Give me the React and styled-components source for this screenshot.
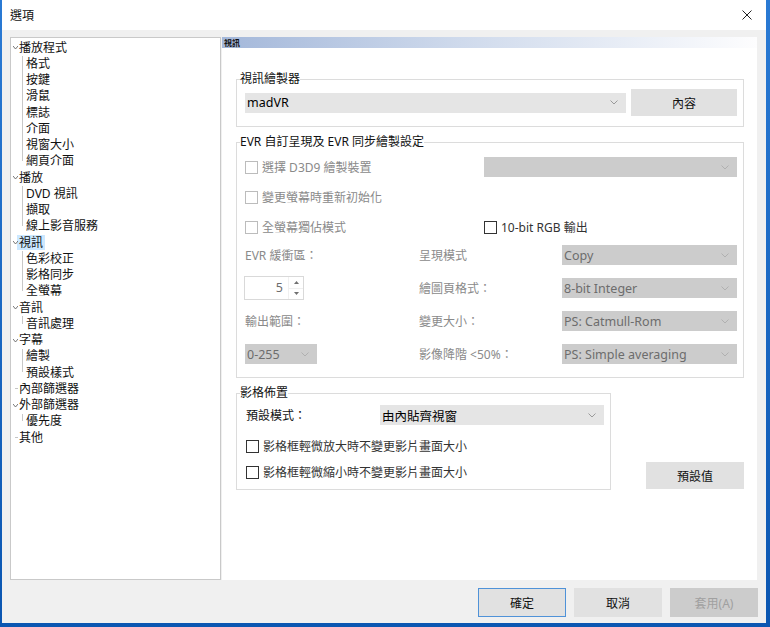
import React from 'react'
import styled, { createGlobalStyle } from 'styled-components'

const GlobalStyle = createGlobalStyle`
  html, body {
    margin: 0;
    padding: 0;
  }
  body {
    background: #0f5bb5;
    font-family: "Noto Sans", "Noto Sans CJK TC", sans-serif;
    font-size: 12px;
    color: #111;
  }
  * {
    box-sizing: border-box;
  }
`

const Desktop = styled.div`
  width: 770px;
  height: 627px;
  padding: 0 4px 4px 2px;
  background: linear-gradient(#2a7ad4, #0b56b1);
`
const Window = styled.div`
  height: 100%;
  display: flex;
  flex-direction: column;
  background: #f0f0f0;
`
const TitleBar = styled.div`
  height: 30px;
  flex: none;
  display: flex;
  align-items: center;
  justify-content: space-between;
  padding: 0 14px 0 8px;
  background: #fff;
  font-size: 12px;
`
const Body = styled.div`
  flex: 1;
  display: flex;
  flex-direction: column;
  padding: 7px 10px 0 8px;
`
const Main = styled.div`
  height: 543px;
  display: flex;
  gap: 1px;
`

/* tree */
const TreeBox = styled.div`
  width: 211px;
  flex: none;
  background: #fff;
  border: 1px solid #c9c9c9;
  padding-top: 1px;
`
const Row = styled.div`
  height: 16.25px;
  display: flex;
  align-items: center;
  padding-left: ${p => (p.$child ? 13 : 6)}px;
  position: relative;
  white-space: nowrap;
`
const Caret = styled.span`
  position: absolute;
  left: 2px;
  top: 7px;
  width: 5px;
  height: 3px;
  display: flex;
`
const Tick = styled.span`
  position: absolute;
  left: 4px;
  top: 8px;
  width: 3px;
  border-top: 1px solid #c4c4c4;
`
const Label = styled.span`
  padding: 0 2px;
  line-height: 15px;
  background: ${p => (p.$selected ? '#cce8ff' : 'transparent')};
`
const Children = styled.div`
  position: relative;
  &::before {
    content: '';
    position: absolute;
    left: 11px;
    top: 1px;
    bottom: 8px;
    border-left: 1px solid #c8c8c8;
  }
`

/* page */
const Page = styled.div`
  flex: 1;
  background: #fff;
  display: flex;
  flex-direction: column;
`
const PageHeader = styled.div`
  height: 11px;
  background: linear-gradient(to right, #a4b8da, #cfdaec 45%, #fdfdfe);
  font-size: 8px;
  font-weight: bold;
  line-height: 11px;
  padding-left: 2px;
`
const PageContent = styled.div`
  padding: 0 13px 0 14px;
  display: flex;
  flex-direction: column;
`
const Group = styled.fieldset`
  margin: ${p => p.$mt}px 0 0;
  padding: 0 6px ${p => p.$pb}px ${p => p.$pl || 8}px;
  border: 1px solid #dcdcdc;
  min-width: 0;
  width: ${p => (p.$w ? `${p.$w}px` : 'auto')};
`
const Legend = styled.legend`
  padding: 0;
  margin-left: ${p => p.$ml || -5}px;
  font-size: 12px;
  line-height: 16px;
`
const RendererRow = styled.div`
  display: flex;
  align-items: center;
  gap: 5px;
  padding-top: 2px;
`
const SelectBox = styled.div`
  width: ${p => p.$w}px;
  height: 20px;
  display: flex;
  align-items: center;
  justify-content: space-between;
  padding: 0 8px 0 2px;
  background: ${p => (p.$disabled ? '#cccccc' : '#e5e5e5')};
  color: ${p => (p.$disabled ? '#6d6d6d' : '#000')};
  font-size: 12.5px;
  white-space: nowrap;
`
const Button = styled.button`
  width: ${p => p.$w}px;
  height: ${p => p.$h}px;
  flex: none;
  font-family: inherit;
  font-size: 12px;
  padding: 0;
  margin-bottom: ${p => p.$mb || 0}px;
  background: ${p => (p.$disabled ? '#cccccc' : '#e1e1e1')};
  color: ${p => (p.$disabled ? '#a0a0a0' : '#111')};
  border: 1px solid ${p => (p.$primary ? '#4f92d8' : p.$disabled ? '#cccccc' : '#e1e1e1')};
`
const TopGrid = styled.div`
  display: grid;
  grid-template-columns: 239px 1fr;
  grid-auto-rows: 20px;
  row-gap: 10px;
  align-items: center;
  padding-top: 7px;
`
const BottomGrid = styled.div`
  display: grid;
  grid-template-columns: 174px 143px 1fr;
  grid-auto-rows: 24px;
  row-gap: 9px;
  align-items: center;
  margin-top: 6px;
`
const Check = styled.label`
  display: flex;
  align-items: center;
  gap: 4px;
  color: ${p => (p.$dim ? '#8a8a8a' : '#333')};
  white-space: nowrap;
`
const Box = styled.span`
  width: 13px;
  height: 13px;
  flex: none;
  background: #fff;
  border: 1px solid ${p => (p.$disabled ? '#bcbcbc' : '#333')};
`
const Text = styled.span`
  color: ${p => (p.$dim ? '#8a8a8a' : '#000')};
  white-space: nowrap;
`
const Spin = styled.div`
  width: 60px;
  height: 24px;
  display: flex;
  border: 1px solid #d9d9d9;
  background: #fff;
  margin-left: -1px;
`
const SpinValue = styled.span`
  flex: 1;
  text-align: right;
  padding-right: 5px;
  line-height: 22px;
  color: #6d6d6d;
  font-size: 12.5px;
`
const SpinArrows = styled.div`
  width: 15px;
  display: flex;
  flex-direction: column;
  border-left: 1px solid #f0f0f0;
`
const SpinHalf = styled.span`
  flex: 1;
  display: flex;
  align-items: center;
  justify-content: center;
  border-bottom: ${p => (p.$top ? '1px solid #f0f0f0' : 'none')};
`
const LayoutRow = styled.div`
  display: flex;
  align-items: flex-end;
  justify-content: space-between;
  margin-top: 7px;
`
const ModeRow = styled.div`
  display: flex;
  align-items: center;
  padding-top: 4px;
  height: 24px;
`
const ModeLabel = styled.span`
  width: 134px;
`
const Checks = styled.div`
  display: flex;
  flex-direction: column;
  gap: 8px;
  margin-top: 12px;
`
const Footer = styled.div`
  display: flex;
  justify-content: flex-end;
  gap: 8px;
  padding: 8px 0 6px;
  margin-right: -2px;
`

const Chevron = ({ color = '#9a9a9a' }) => (
  <svg width="8" height="5" viewBox="0 0 8 5">
    <path d="M0.5 0.5 L4 4 L7.5 0.5" fill="none" stroke={color} strokeWidth="1" />
  </svg>
)

const Select = ({ w, disabled, children }) => (
  <SelectBox $w={w} $disabled={disabled}>
    <span>{children}</span>
    <Chevron color={disabled ? '#b0b0b0' : '#9a9a9a'} />
  </SelectBox>
)

const CheckBox = ({ dim, children }) => (
  <Check $dim={dim}>
    <Box $disabled={dim} />
    {children}
  </Check>
)

const tree = [
  { label: '播放程式', children: ['格式', '按鍵', '滑鼠', '標誌', '介面', '視窗大小', '網頁介面'] },
  { label: '播放', children: ['DVD 視訊', '擷取', '線上影音服務'] },
  { label: '視訊', selected: true, children: ['色彩校正', '影格同步', '全螢幕'] },
  { label: '音訊', children: ['音訊處理'] },
  { label: '字幕', children: ['繪製', '預設樣式'] },
  { label: '內部篩選器' },
  { label: '外部篩選器', children: ['優先度'] },
  { label: '其他' },
]

const Tree = () => (
  <TreeBox>
    {tree.map(node => (
      <React.Fragment key={node.label}>
        <Row>
          {node.children ? (
            <Caret>
              <svg width="5" height="3" viewBox="0 0 5 3">
                <path d="M0 0 L2.5 3 L5 0" fill="none" stroke="#666" strokeWidth="0.9" />
              </svg>
            </Caret>
          ) : (
            <Tick />
          )}
          <Label $selected={node.selected}>{node.label}</Label>
        </Row>
        {node.children && (
          <Children>
            {node.children.map(c => (
              <Row key={c} $child>
                <Label>{c}</Label>
              </Row>
            ))}
          </Children>
        )}
      </React.Fragment>
    ))}
  </TreeBox>
)

const App = () => (
  <>
    <GlobalStyle />
    <Desktop>
      <Window>
        <TitleBar>
          <span>選項</span>
          <svg width="10" height="10" viewBox="0 0 10 10">
            <path d="M0.5 0.5 L9.5 9.5 M9.5 0.5 L0.5 9.5" stroke="#222" strokeWidth="1" />
          </svg>
        </TitleBar>
        <Body>
          <Main>
            <Tree />
            <Page>
              <PageHeader>視訊</PageHeader>
              <PageContent>
                <Group $mt={23} $pb={10}>
                  <Legend>視訊繪製器</Legend>
                  <RendererRow>
                    <Select w={381}>madVR</Select>
                    <Button $w={106} $h={27}>內容</Button>
                  </RendererRow>
                </Group>

                <Group $mt={7} $pb={11}>
                  <Legend>EVR 自訂呈現及 EVR 同步繪製設定</Legend>
                  <TopGrid>
                    <CheckBox dim>選擇 D3D9 繪製裝置</CheckBox>
                    <Select disabled />
                    <CheckBox dim>變更螢幕時重新初始化</CheckBox>
                    <span />
                    <CheckBox dim>全螢幕獨佔模式</CheckBox>
                    <CheckBox>10-bit RGB 輸出</CheckBox>
                  </TopGrid>
                  <BottomGrid>
                    <Text $dim>EVR 緩衝區：</Text>
                    <Text $dim>呈現模式</Text>
                    <Select disabled>Copy</Select>

                    <Spin>
                      <SpinValue>5</SpinValue>
                      <SpinArrows>
                        <SpinHalf $top>
                          <svg width="5" height="3" viewBox="0 0 5 3"><path d="M0 3 L2.5 0 L5 3 Z" fill="#707070" /></svg>
                        </SpinHalf>
                        <SpinHalf>
                          <svg width="5" height="3" viewBox="0 0 5 3"><path d="M0 0 L2.5 3 L5 0 Z" fill="#707070" /></svg>
                        </SpinHalf>
                      </SpinArrows>
                    </Spin>
                    <Text $dim>繪圖頁格式：</Text>
                    <Select disabled>8-bit Integer</Select>

                    <Text $dim>輸出範圍：</Text>
                    <Text $dim>變更大小：</Text>
                    <Select disabled>PS: Catmull-Rom</Select>

                    <Select disabled w={72}>0-255</Select>
                    <Text $dim>影像降階 &lt;50%：</Text>
                    <Select disabled>PS: Simple averaging</Select>
                  </BottomGrid>
                </Group>

                <LayoutRow>
                  <Group $mt={0} $pb={8} $pl={9} $w={375}>
                    <Legend $ml={-6}>影格佈置</Legend>
                    <ModeRow>
                      <ModeLabel>預設模式：</ModeLabel>
                      <Select w={224}>由內貼齊視窗</Select>
                    </ModeRow>
                    <Checks>
                      <CheckBox>影格框輕微放大時不變更影片畫面大小</CheckBox>
                      <CheckBox>影格框輕微縮小時不變更影片畫面大小</CheckBox>
                    </Checks>
                  </Group>
                  <Button $w={98} $h={27} $mb={1}>預設值</Button>
                </LayoutRow>
              </PageContent>
            </Page>
          </Main>
          <Footer>
            <Button $w={88} $h={29} $primary>確定</Button>
            <Button $w={88} $h={29}>取消</Button>
            <Button $w={88} $h={29} $disabled>套用(A)</Button>
          </Footer>
        </Body>
      </Window>
    </Desktop>
  </>
)

export default App
